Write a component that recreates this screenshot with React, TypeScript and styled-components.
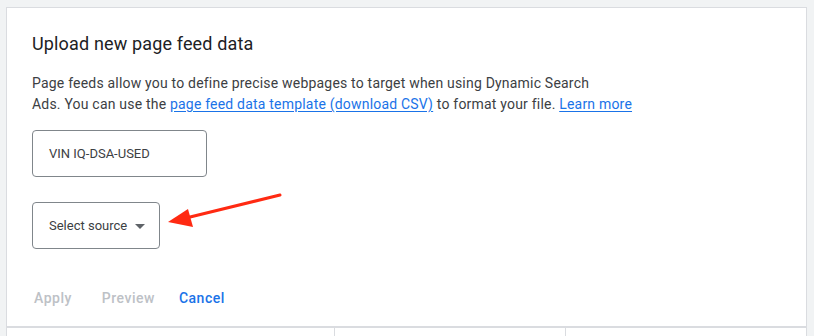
import { createGlobalStyle, styled } from "styled-components";

const GlobalStyle = createGlobalStyle`
  html, body {
    margin: 0;
    padding: 0;
    background: #f1f3f4;
  }
  body {
    font-family: Roboto, "Liberation Sans", Arial, sans-serif;
    -webkit-font-smoothing: antialiased;
  }
`;

const Page = styled("div")`
  width: 814px;
  height: 336px;
  overflow: hidden;
  box-sizing: border-box;
  padding: 7px 7px 0 6px;
`;

const Panel = styled("div")`
  background: #fff;
  border: 1px solid #dadce0;
  border-bottom: none;
  height: 100%;
  box-sizing: border-box;
  display: flex;
  flex-direction: column;
`;

const Body = styled("div")`
  position: relative;
  padding: 24px 25px 10px;
  display: flex;
  flex-direction: column;
  align-items: flex-start;
`;

const Title = styled("h2")`
  margin: 0;
  font-size: 18px;
  line-height: 24px;
  font-weight: 400;
  letter-spacing: 0.15px;
  color: #202124;
`;

const Description = styled("p")`
  margin: 17px 0 0;
  font-size: 14px;
  line-height: 21px;
  letter-spacing: 0.2px;
  color: #3c4043;
`;

const Link = styled("a")`
  color: #1a73e8;
  text-decoration: underline;
  text-underline-offset: 2px;
`;

const Field = styled("div")<{ $width: number; $top: number }>`
  margin-top: ${(p) => p.$top}px;
  width: ${(p) => p.$width}px;
  height: 47px;
  box-sizing: border-box;
  border: 1px solid #80868b;
  border-radius: 4px;
  display: flex;
  align-items: center;
  padding: 0 14px 0 16px;
  font-size: 13px;
  white-space: nowrap;
  color: #3c4043;
  gap: 8px;
`;

const Caret = styled("span")`
  width: 0;
  height: 0;
  border-left: 5px solid transparent;
  border-right: 5px solid transparent;
  border-top: 5px solid #5f6368;
  margin-top: 1px;
`;

const Actions = styled("div")`
  margin-top: 31px;
  display: flex;
  align-items: center;
  height: 36px;
  margin-left: 2px;
`;

const ActionButton = styled("button")<{ $active?: boolean; $gap: number }>`
  background: none;
  border: none;
  padding: 0;
  margin-right: ${(p) => p.$gap}px;
  font-family: inherit;
  font-size: 14px;
  font-weight: 500;
  letter-spacing: 0.5px;
  color: ${(p) => (p.$active ? "#1a73e8" : "#bdc1c6")};
  cursor: ${(p) => (p.$active ? "pointer" : "default")};
`;

const Arrow = styled("svg")`
  position: absolute;
  left: 155px;
  top: 180px;
  overflow: visible;
`;

const TableHead = styled("div")`
  margin-top: auto;
  border-top: 2px solid #dadce0;
  display: grid;
  grid-template-columns: 327px 231px 1fr;
  height: 8px;
`;

const HeadCell = styled("div")<{ $divider?: boolean }>`
  border-left: ${(p) => (p.$divider ? "1px solid #dadce0" : "none")};
`;

export default function App() {
  return (
    <>
      <GlobalStyle />
      <Page>
        <Panel>
          <Body>
            <Title>Upload new page feed data</Title>
            <Description>
              Page feeds allow you to define precise webpages to target when
              using Dynamic Search
              <br />
              Ads. You can use the{" "}
              <Link href="#">page feed data template (download CSV)</Link> to
              format your file. <Link href="#">Learn more</Link>
            </Description>
            <Field $width={175} $top={15}>
              VIN IQ-DSA-USED
            </Field>
            <Field $width={128} $top={25}>
              Select source
              <Caret />
            </Field>
            <Actions>
              <ActionButton $gap={30} disabled>
                Apply
              </ActionButton>
              <ActionButton $gap={24} disabled>
                Preview
              </ActionButton>
              <ActionButton $gap={0} $active>
                Cancel
              </ActionButton>
            </Actions>
            <Arrow width="120" height="40" viewBox="0 0 120 40">
              <line
                x1="118"
                y1="7"
                x2="24"
                y2="30"
                stroke="#ff2a12"
                strokeWidth="3"
                strokeLinecap="round"
              />
              <polygon points="6,34 26,21 31,39" fill="#ff2a12" />
            </Arrow>
          </Body>
          <TableHead>
            <HeadCell />
            <HeadCell $divider />
            <HeadCell $divider />
          </TableHead>
        </Panel>
      </Page>
    </>
  );
}
